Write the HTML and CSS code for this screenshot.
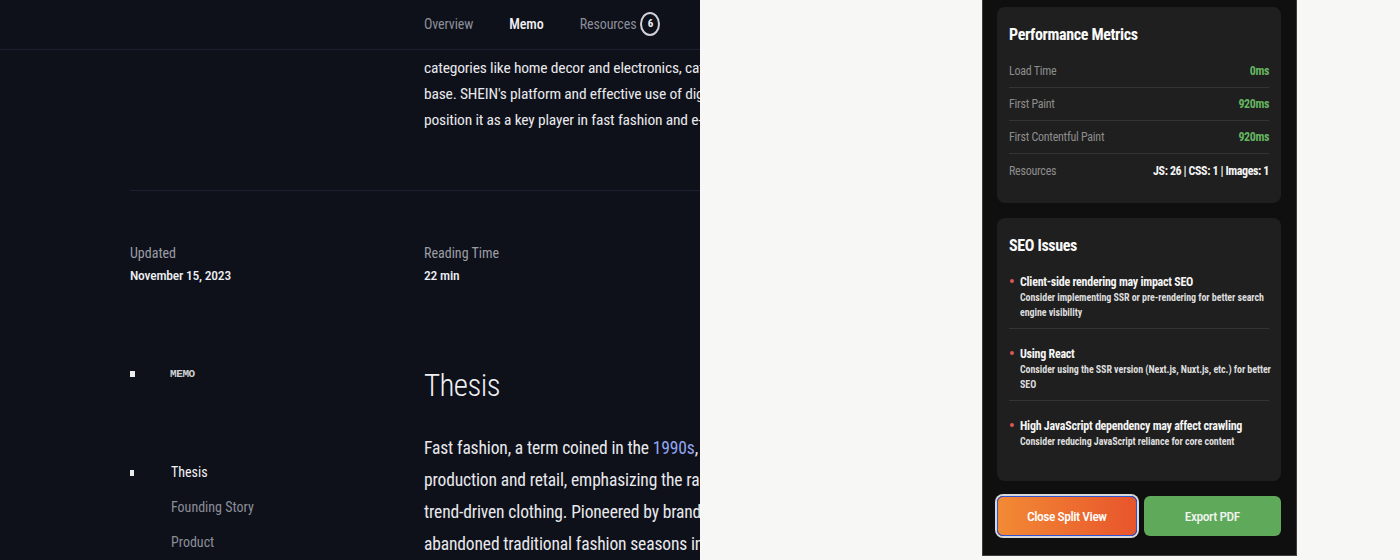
FILE: index.html
```html
<!DOCTYPE html>
<html lang="en">
<head>
<meta charset="utf-8">
<title>SHEIN Memo – Split View</title>
<link rel="stylesheet" href="styles.css">
</head>
<body>
<div class="split">
  <section class="doc">
    <header class="doc-nav">
      <div class="wrap">
        <div></div>
        <nav class="tabs">
          <a class="tab">Overview</a>
          <a class="tab active">Memo</a>
          <a class="tab">Resources <span class="badge">6</span></a>
        </nav>
      </div>
    </header>

    <div class="wrap">
      <div></div>
      <p class="lead">categories like home decor and electronics, catering to a broad customer<br>base. SHEIN's platform and effective use of digital marketing continue to<br>position it as a key player in fast fashion and e-commerce.</p>
    </div>

    <div class="wrap-line"><hr class="divider"></div>

    <div class="wrap meta">
      <div class="meta-item">
        <span class="meta-label">Updated</span>
        <span class="meta-value">November 15, 2023</span>
      </div>
      <div class="meta-item">
        <span class="meta-label">Reading Time</span>
        <span class="meta-value">22 min</span>
      </div>
    </div>

    <div class="wrap body">
      <aside class="toc">
        <div class="toc-head"><span class="sq"></span><span class="toc-title">MEMO</span></div>
        <ul class="toc-list">
          <li class="toc-item current"><span class="sq small"></span>Thesis</li>
          <li class="toc-item">Founding Story</li>
          <li class="toc-item">Product</li>
        </ul>
      </aside>
      <article class="memo">
        <h1 class="memo-title">Thesis</h1>
        <p class="memo-text">Fast fashion, a term coined in the <a class="link">1990s</a>, refers to a business model in clothing<br>production and retail, emphasizing the rapid turnaround of affordable,<br>trend-driven clothing. Pioneered by brands like Zara and H&amp;M, the model<br>abandoned traditional fashion seasons in favor of constant new arrivals.</p>
      </article>
    </div>
  </section>

  <section class="stage">
    <div class="panel">
      <div class="card">
        <h2 class="card-title">Performance Metrics</h2>
        <ul class="metrics">
          <li class="metric"><span class="m-label">Load Time</span><span class="m-value good">0ms</span></li>
          <li class="metric"><span class="m-label">First Paint</span><span class="m-value good">920ms</span></li>
          <li class="metric"><span class="m-label">First Contentful Paint</span><span class="m-value good">920ms</span></li>
          <li class="metric"><span class="m-label">Resources</span><span class="m-value">JS: 26 | CSS: 1 | Images: 1</span></li>
        </ul>
      </div>

      <div class="card seo">
        <h2 class="card-title">SEO Issues</h2>
        <ul class="issues">
          <li class="issue">
            <span class="dot"></span>
            <div class="issue-body">
              <div class="issue-title">Client-side rendering may impact SEO</div>
              <div class="issue-desc">Consider implementing SSR or pre-rendering for better search engine visibility</div>
            </div>
          </li>
          <li class="issue">
            <span class="dot"></span>
            <div class="issue-body">
              <div class="issue-title">Using React</div>
              <div class="issue-desc">Consider using the SSR version (Next.js, Nuxt.js, etc.) for better SEO</div>
            </div>
          </li>
          <li class="issue">
            <span class="dot"></span>
            <div class="issue-body">
              <div class="issue-title">High JavaScript dependency may affect crawling</div>
              <div class="issue-desc">Consider reducing JavaScript reliance for core content</div>
            </div>
          </li>
        </ul>
      </div>

      <div class="actions">
        <button class="btn btn-close">Close Split View</button>
        <button class="btn btn-export">Export PDF</button>
      </div>
    </div>
  </section>
</div>
</body>
</html>
```
FILE: styles.css
```css
* { box-sizing: border-box; }
html, body { margin: 0; padding: 0; }
body {
  width: 1400px;
  height: 560px;
  overflow: hidden;
  font-family: "Roboto", "Liberation Sans", sans-serif;
  font-stretch: 75%;
}
.split { display: flex; height: 560px; }

/* ---------- left document pane ---------- */
.doc {
  width: 700px;
  flex: none;
  background: #0f111a;
  color: #e7e8ec;
  overflow: hidden;
}
.wrap {
  display: grid;
  grid-template-columns: 294px 1000px;
  padding-left: 130px;
}
.doc-nav {
  height: 50px;
  border-bottom: 1px solid #1d2030;
}
.doc-nav .wrap { height: 47px; align-items: center; }
.tabs { display: flex; align-items: center; gap: 36px; font-size: 14px; }
.tab { color: #8b8e99; display: flex; align-items: center; gap: 4px; line-height: 20px; letter-spacing: -0.1px; }
.tab.active { color: #f2f2f4; font-weight: 500; }
.badge {
  display: inline-flex;
  align-items: center;
  justify-content: center;
  width: 20px;
  height: 24px;
  border: 2px solid #cfd0d6;
  border-radius: 50%;
  color: #f4f4f6;
  font-size: 11px;
  font-weight: 700;
  letter-spacing: 0;
}
.lead {
  margin: 0;
  padding-top: 5px;
  font-size: 15.5px;
  letter-spacing: -0.18px;
  line-height: 26px;
  white-space: nowrap;
  color: #e8e9ed;
}
.wrap-line { padding-left: 130px; padding-top: 57px; }
.divider { margin: 0; border: 0; height: 1px; width: 900px; background: #1d2030; }

.meta { padding-top: 51px; }
.meta-item { display: flex; flex-direction: column; font-size: 14px; line-height: 22px; }
.meta-label { color: #9b9da6; }
.meta-value { color: #eceef2; font-weight: 500; font-size: 13.5px; letter-spacing: -0.2px; }

.body { padding-top: 80px; }
.toc { position: relative; }
.toc-head { display: flex; align-items: center; height: 16px; }
.sq { width: 5px; height: 6px; background: #ececec; flex: none; }
.sq.small { width: 4px; height: 6px; position: absolute; left: 0; top: 15px; }
.toc-title {
  margin-left: 35px;
  font-family: "Liberation Mono", "DejaVu Sans Mono", monospace;
  font-size: 11px;
  font-weight: 700;
  color: #cfd0d4;
  font-stretch: 100%;
  letter-spacing: -0.4px;
}
.toc-list { list-style: none; margin: 73px 0 0; padding: 0; }
.toc-item {
  position: relative;
  padding-left: 41px;
  font-size: 14px;
  line-height: 35px;
  color: #8b8e99;
}
.toc-item.current { color: #f2f3f5; }

.memo-title {
  margin: 0;
  font-size: 31px;
  letter-spacing: -0.6px;
  line-height: 40px;
  font-weight: 300;
  color: #eef0f3;
}
.memo-text {
  margin: 26px 0 0;
  font-size: 17.5px;
  letter-spacing: -0.14px;
  line-height: 32px;
  white-space: nowrap;
  color: #e8e9ed;
}
.link { color: #93a6f2; }

/* ---------- right stage ---------- */
.stage {
  flex: 1;
  background: #f7f7f5;
  padding-left: 282px;
}
.panel {
  width: 315px;
  height: 556px;
  background: #0f0f0f;
  border: 1px solid #3d3d3d;
  border-top: 0;
  padding: 7px 15px 0 14px;
  display: flex;
  flex-direction: column;
  gap: 15px;
}
.card {
  background: #1f1f1f;
  border-radius: 8px;
  padding: 17px 12px 16px;
}
.card-title {
  margin: 0;
  font-size: 16px;
  letter-spacing: -0.35px;
  line-height: 22px;
  font-weight: 700;
  color: #fafafa;
}
.metrics { list-style: none; margin: 9px 0 0; padding: 0; }
.metric {
  display: flex;
  justify-content: space-between;
  align-items: center;
  height: 33px;
  font-size: 12px;
  border-bottom: 1px solid #343434;
}
.metric:last-child { border-bottom: 0; height: 33px; }
.m-label { color: #8d8d8d; letter-spacing: -0.25px; }
.m-value { color: #f4f4f4; font-weight: 700; letter-spacing: -0.4px; }
.m-value.good { color: #64b561; }

.seo { padding-bottom: 24px; }
.issues { list-style: none; margin: 9px 0 0; padding: 0; }
.issue {
  display: flex;
  padding: 8px 0;
  border-bottom: 1px solid #343434;
  margin-bottom: 9px;
}
.issue:last-child { border-bottom: 0; margin-bottom: 0; }
.dot {
  width: 4px;
  height: 4px;
  border-radius: 50%;
  background: #e05555;
  margin: 5px 6px 0 1px;
  flex: none;
}
.issue-body { margin-right: -6px; }
.issue-title { font-size: 12px; letter-spacing: -0.25px; line-height: 16px; font-weight: 700; color: #f4f4f4; }
.issue-desc { font-size: 10px; letter-spacing: -0.08px; line-height: 15px; font-weight: 700; color: #dcdcdc; }

.actions { display: flex; gap: 7px; }
.btn {
  flex: 1;
  height: 40px;
  border-radius: 6px;
  font-family: inherit;
  font-stretch: 75%;
  font-size: 13.5px;
  letter-spacing: -0.45px;
  font-weight: 500;
  color: #fff;
  border: 0;
}
.btn-close {
  background: linear-gradient(90deg, #f28a35, #e8552b);
  border: 1.5px solid #2f55d6;
  box-shadow: 0 0 0 2px #d9d9d9;
}
.btn-export { background: #5fa95b; color: #f0f4ee; }
```
